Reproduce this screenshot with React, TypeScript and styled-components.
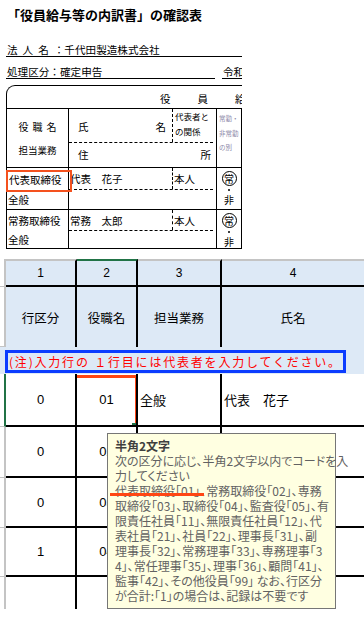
import React from 'react';
import styled, { createGlobalStyle } from 'styled-components';

const GlobalStyle = createGlobalStyle`
  html, body {
    margin: 0;
    padding: 0;
    background: #fff;
  }
  body {
    font-family: "Noto Sans CJK JP", "Liberation Sans", sans-serif;
    color: #000;
  }
  * {
    box-sizing: border-box;
  }
`;

const Page = styled.div`
  position: relative;
  width: 364px;
  height: 620px;
  overflow: hidden;
  background: #fff;
`;

/* ---------- confirmation sheet (top) ---------- */

const Doc = styled.div`
  width: 242px;
  overflow: hidden;
  padding-top: 7px;
`;

const Title = styled.h1`
  margin: 0 0 0 7px;
  font-size: 13px;
  line-height: 16px;
  font-weight: bold;
  white-space: nowrap;
`;

const InfoLine = styled.div<{ mt: number }>`
  display: flex;
  margin: ${(p) => p.mt}px 0 0 6px;
  width: 236px;
  font-size: 10.6px;
  line-height: 13px;
  white-space: nowrap;
`;

const Underlined = styled.div<{ w?: number; ml?: number }>`
  ${(p) => (p.w ? `width: ${p.w}px;` : 'flex: 1;')}
  margin-left: ${(p) => p.ml || 0}px;
  padding-left: 1px;
  border-bottom: 1px solid #000;
  overflow: hidden;
`;

const Spaced = styled.span`
  letter-spacing: 5px;
`;

const FormBox = styled.div`
  margin: 6px 0 0 6px;
  width: 236px;
  border-top: 1px solid #000;
  border-left: 1px solid #000;
  border-top-left-radius: 9px;
  font-size: 10.5px;
`;

const FormHead = styled.div`
  height: 23px;
  padding: 5px 0 0 153px;
  line-height: 16px;
  letter-spacing: 27px;
  white-space: nowrap;
  overflow: hidden;
  border-bottom: 1px solid #000;
`;

const FormRow = styled.div<{ h: number }>`
  display: flex;
  height: ${(p) => p.h}px;
  border-bottom: 1px solid #000;
`;

const PostCol = styled.div<{ top: number }>`
  display: grid;
  grid-template-rows: ${(p) => p.top}px 1fr;
  width: 62px;
  border-right: 1px solid #000;
  padding-left: 1px;
  align-items: center;
  white-space: nowrap;
`;

const PostHeadCol = styled.div`
  width: 62px;
  border-right: 1px solid #000;
  padding-top: 6px;
  text-align: center;
  line-height: 23px;
`;

const PostTitle = styled.span`
  font-size: 10px;
  letter-spacing: 4px;
  margin-right: -4px;
`;

const DutyTitle = styled.span`
  font-size: 9.5px;
`;

const Marked = styled.span`
  position: relative;
  padding-left: 1px;

  &::after {
    content: '';
    position: absolute;
    left: -2px;
    top: -2px;
    width: 62px;
    height: 18px;
    border: 2px solid #f4511e;
  }
`;

const Middle = styled.div<{ top: number }>`
  display: grid;
  grid-template-rows: ${(p) => p.top}px 1fr;
  width: 148px;
  border-right: 1px solid #000;
`;

const SubRow = styled.div`
  display: flex;
  border-bottom: 1px dashed #000;
  margin-right: 3px;
`;

const NameCell = styled.div<{ spread?: boolean }>`
  display: flex;
  align-items: center;
  justify-content: ${(p) => (p.spread ? 'space-between' : 'flex-start')};
  width: 104px;
  padding: ${(p) => (p.spread ? '2px 6px 0 9px' : '0 0 0 1px')};
  border-right: 1px dashed #000;
  white-space: nowrap;
`;

const RelCell = styled.div<{ small?: boolean }>`
  flex: 1;
  padding-left: ${(p) => (p.small ? 2 : 1)}px;
  font-size: ${(p) => (p.small ? 8.5 : 10.5)}px;
  line-height: ${(p) => (p.small ? '15px' : 'normal')};
  display: ${(p) => (p.small ? 'block' : 'flex')};
  align-items: center;
  white-space: nowrap;
`;

const AddrRow = styled.div`
  display: flex;
  align-items: center;
  justify-content: space-between;
  padding: 0 5px 2px 9px;
`;

const KindCol = styled.div`
  width: 25px;
  border-right: 1px solid #000;
  display: flex;
  flex-direction: column;
  align-items: center;
  padding-top: 3px;
`;

const KindNote = styled.div`
  width: 25px;
  border-right: 1px solid #000;
  padding: 2px 0 0 2px;
  font-size: 6.5px;
  line-height: 14.5px;
  color: #8c88a8;
  white-space: nowrap;
`;

const Circled = styled.span`
  display: flex;
  align-items: center;
  justify-content: center;
  width: 15px;
  height: 15px;
  border: 1px solid #000;
  border-radius: 50%;
  font-size: 10px;
  line-height: 1;
`;

const Dot = styled.span`
  width: 2px;
  height: 2px;
  margin: 3px 0 2px;
  border-radius: 50%;
  background: #000;
`;

const Kanji = styled.span`
  font-size: 10px;
  line-height: 13px;
`;

/* ---------- spreadsheet (bottom) ---------- */

const Sheet = styled.div`
  position: relative;
  margin-top: 10px;
`;

const cols = '6px 71px 61px 84px 1fr';

const SheetRow = styled.div<{ h: number; head?: boolean }>`
  display: grid;
  grid-template-columns: ${cols};
  height: ${(p) => p.h}px;
  background: ${(p) => (p.head ? '#dde9f6' : '#fff')};
`;

const Gutter = styled.div<{ active?: boolean; tick?: boolean }>`
  background: #fff;
  border-right: 2px solid ${(p) => (p.active ? '#217346' : '#c4c4c4')};
  border-bottom: ${(p) => (p.tick ? '1px solid #c4c4c4' : 'none')};
`;

const Cell = styled.div<{
  last?: boolean;
  bottom?: boolean;
  top?: string;
  align?: 'center' | 'left';
  size?: number;
}>`
  position: relative;
  display: flex;
  align-items: center;
  justify-content: ${(p) => (p.align === 'left' ? 'flex-start' : 'center')};
  padding-left: ${(p) => (p.align === 'left' ? '2px' : '0')};
  border-right: ${(p) => (p.last ? 'none' : '2px solid #000')};
  border-bottom: ${(p) => (p.bottom ? '2px solid #000' : 'none')};
  border-top: ${(p) => (p.top ? `2px solid ${p.top}` : 'none')};
  font-family: "Liberation Sans", "Noto Sans CJK JP", sans-serif;
  font-size: ${(p) => p.size || 13}px;
  white-space: nowrap;
  overflow: hidden;
`;

const Selection = styled.div`
  position: absolute;
  left: -3px;
  top: 1px;
  right: -2px;
  bottom: -4px;
  border: 3px solid #ff4614;

  &::after {
    content: '';
    position: absolute;
    right: -1px;
    bottom: -1px;
    width: 4px;
    height: 4px;
    background: #217346;
  }
`;

const NoteRow = styled.div`
  display: flex;
  height: 27px;
  padding-top: 3px;
  background: #dde9f6;
`;

const NoteBox = styled.div`
  width: 341px;
  height: 23px;
  margin-left: 5px;
  border: 3px solid #0b3cff;
  display: flex;
  align-items: center;
  padding-left: 1px;
  color: #ff0000;
  font-size: 12px;
  letter-spacing: 1.8px;
  white-space: nowrap;
  overflow: hidden;
`;

const Tip = styled.div`
  position: absolute;
  left: 107px;
  top: 174px;
  width: 229px;
  height: 176px;
  padding: 4px 0 0 7px;
  background: #ffffe1;
  border: 1px solid #767676;
  font-family: "Noto Sans CJK JP", sans-serif;
  font-size: 12px;
  line-height: 15px;
  color: #626262;
  white-space: nowrap;
  font-feature-settings: "palt";
`;

const TipTitle = styled.div`
  font-weight: bold;
  color: #3f3f3f;
  font-feature-settings: normal;
`;

const TipLine = styled.div``;

const Flagged = styled.span`
  position: relative;
  display: inline-block;

  &::after {
    content: '';
    position: absolute;
    left: -5px;
    right: -4px;
    bottom: 2px;
    height: 3px;
    background: #ff4614;
  }
`;

const tipLines: React.ReactNode[] = [
  '次の区分に応じ、半角2文字以内でコードを入',
  '力してください',
  <>
    <Flagged>代表取締役「01」</Flagged>、常務取締役「02」、専務
  </>,
  '取締役「03」、取締役「04」、監査役「05」、有',
  '限責任社員「11」、無限責任社員「12」、代',
  '表社員「21」、社員「22」、理事長「31」、副',
  '理事長「32」、常務理事「33」、専務理事「3',
  '4」、常任理事「35」、理事「36」、顧問「41」、',
  '監事「42」、その他役員「99」 なお、行区分',
  'が合計:「1」の場合は、記録は不要です',
];

// rows 2 and below sit under the tooltip, so only the visible values are kept
const rows = [
  { h: 53, kind: '0', post: '01', duty: '全般', name: '代表　花子', active: true },
  { h: 51, kind: '0', post: '02', duty: '', name: '' },
  { h: 50, kind: '0', post: '03', duty: '', name: '' },
  { h: 49, kind: '1', post: '04', duty: '', name: '' },
  { h: 32, kind: '', post: '', duty: '', name: '', end: true },
];

const officers = [
  { h: 42, top: 22, post: '代表取締役', name: '代表　花子', marked: true },
  { h: 39, top: 21, post: '常務取締役', name: '常務　太郎' },
];

export default function App() {
  return (
    <Page>
      <GlobalStyle />
      <Doc>
        <Title>「役員給与等の内訳書」の確認表</Title>
        <InfoLine mt={20}>
          <Underlined>
            <Spaced>法人名</Spaced>：千代田製造株式会社
          </Underlined>
        </InfoLine>
        <InfoLine mt={8}>
          <Underlined w={209}>処理区分：確定申告</Underlined>
          <Underlined ml={7}>令和</Underlined>
        </InfoLine>

        <FormBox>
          <FormHead>役員給与</FormHead>
          <FormRow h={59}>
            <PostHeadCol>
              <PostTitle>役職名</PostTitle>
              <br />
              <DutyTitle>担当業務</DutyTitle>
            </PostHeadCol>
            <Middle top={34}>
              <SubRow>
                <NameCell spread>
                  <span>氏</span>
                  <span>名</span>
                </NameCell>
                <RelCell small>
                  代表者と
                  <br />
                  の関係
                </RelCell>
              </SubRow>
              <AddrRow>
                <span>住</span>
                <span>所</span>
              </AddrRow>
            </Middle>
            <KindNote>
              常勤・
              <br />
              非常勤
              <br />
              の別
            </KindNote>
          </FormRow>
          {officers.map((o) => (
            <FormRow h={o.h} key={o.post}>
              <PostCol top={o.top}>
                <span>{o.marked ? <Marked>{o.post}</Marked> : o.post}</span>
                <span>全般</span>
              </PostCol>
              <Middle top={o.top}>
                <SubRow>
                  <NameCell>{o.name}</NameCell>
                  <RelCell>本人</RelCell>
                </SubRow>
                <div />
              </Middle>
              <KindCol>
                <Circled>常</Circled>
                <Dot />
                <Kanji>非</Kanji>
              </KindCol>
            </FormRow>
          ))}
        </FormBox>
      </Doc>

      <Sheet>
        <SheetRow h={28} head>
          <Gutter tick />
          <Cell top="#c4c4c4" bottom size={12}>1</Cell>
          <Cell top="#217346" bottom size={12}>2</Cell>
          <Cell top="#c4c4c4" bottom size={12}>3</Cell>
          <Cell top="#c4c4c4" bottom last size={12}>4</Cell>
        </SheetRow>
        <SheetRow h={60} head>
          <Gutter tick />
          <Cell size={12.5}>行区分</Cell>
          <Cell size={12.5}>役職名</Cell>
          <Cell size={12.5}>担当業務</Cell>
          <Cell last size={12.5}>氏名</Cell>
        </SheetRow>
        <NoteRow>
          <NoteBox>(注)入力行の １行目には代表者を入力してください。</NoteBox>
        </NoteRow>
        {rows.map((r, i) => (
          <SheetRow h={r.h} key={i}>
            <Gutter active={r.active} tick={!r.end} />
            <Cell bottom={!r.end}>{r.kind}</Cell>
            <Cell bottom={!r.end}>
              {r.post}
              {r.active && <Selection />}
            </Cell>
            <Cell bottom={!r.end} align="left">
              {r.duty}
            </Cell>
            <Cell bottom={!r.end} last align="left">
              {r.name}
            </Cell>
          </SheetRow>
        ))}

        <Tip>
          <TipTitle>半角2文字</TipTitle>
          {tipLines.map((l, i) => (
            <TipLine key={i}>{l}</TipLine>
          ))}
        </Tip>
      </Sheet>
    </Page>
  );
}
